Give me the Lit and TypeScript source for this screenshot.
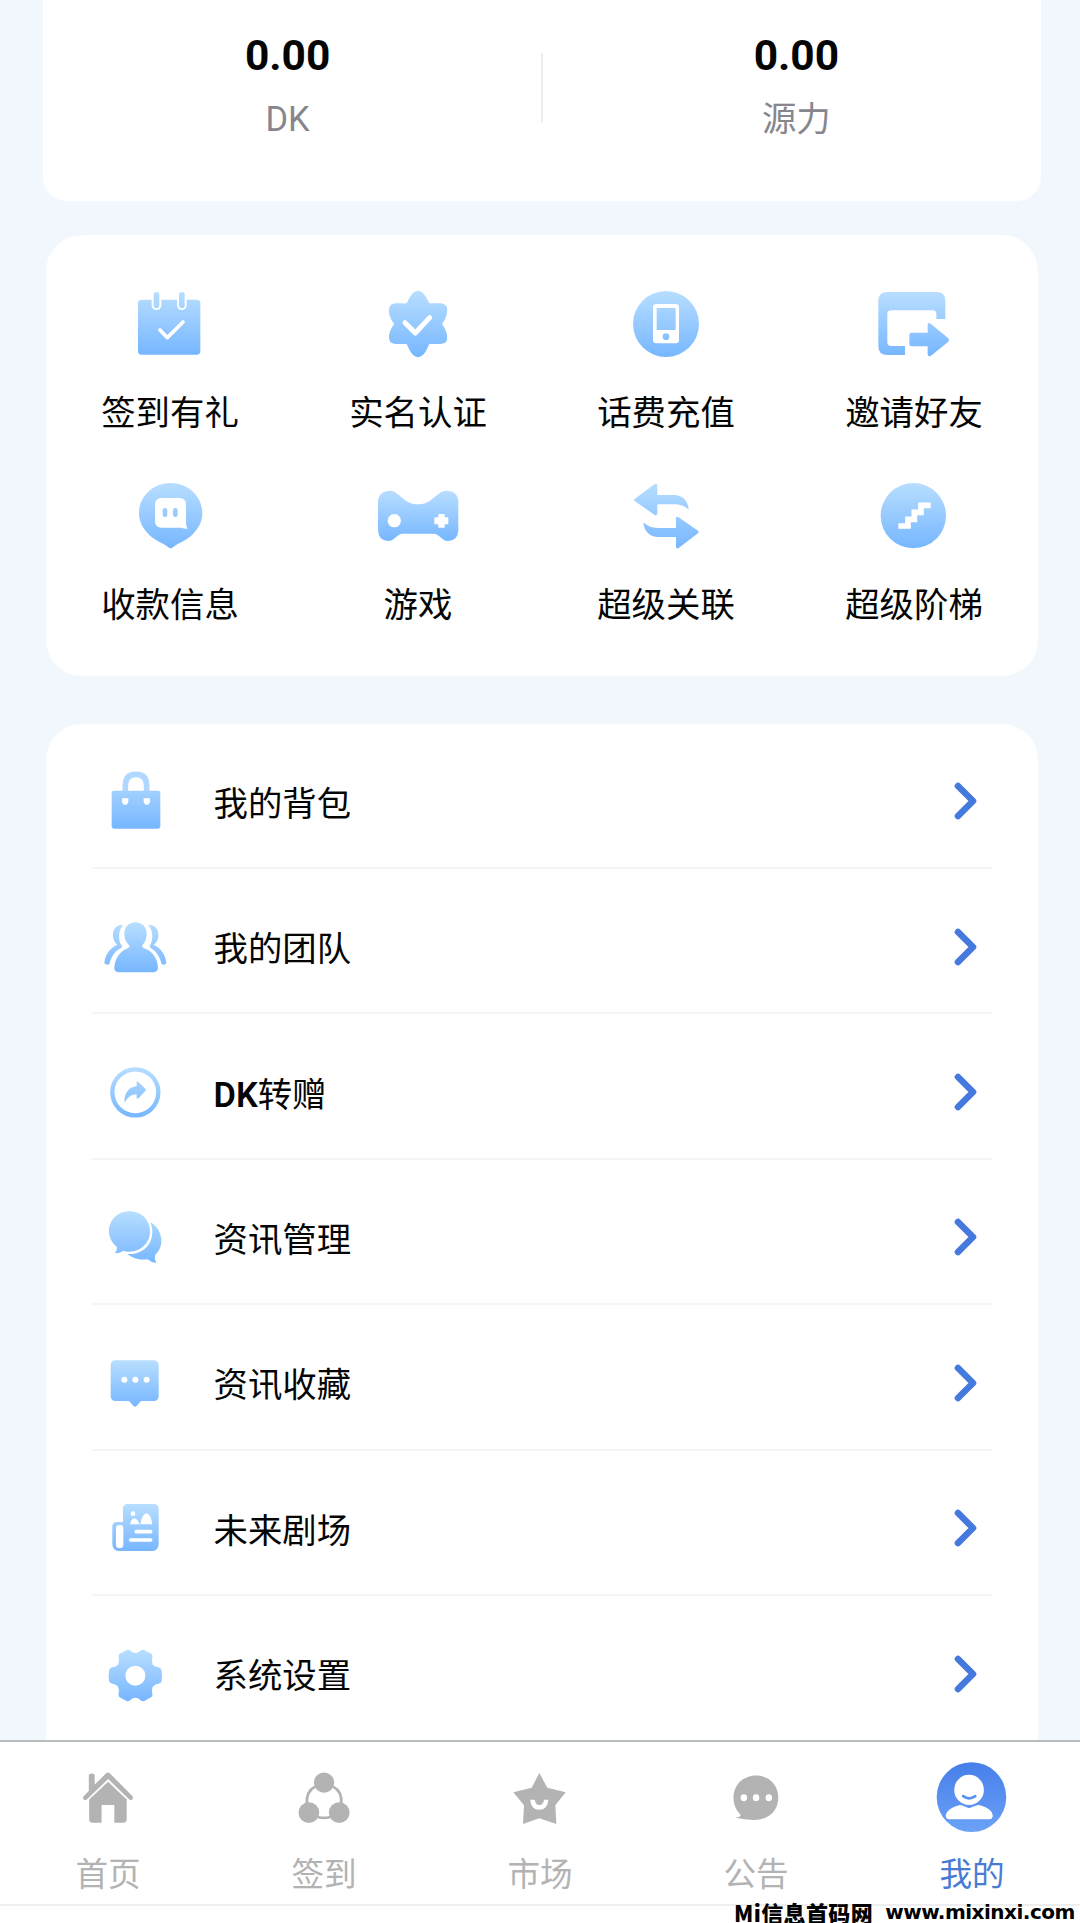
import { LitElement, html, svg, css, type TemplateResult } from "lit";
import { customElement, property } from "lit/decorators.js";

interface IconDef {
  box: string;
  // vertical extent of the gradient, in the icon's own units
  from: number;
  to: number;
  body: TemplateResult;
}

const ICONS: Record<string, IconDef> = {
  calendar: {
    box: "144 36 252 252", from: 64, to: 254,
    body: svg`
      <rect x="174" y="89" width="187" height="165" rx="11"/>
      <rect x="215" y="60" width="29" height="60" rx="14" fill="#fff"/>
      <rect x="291" y="60" width="29" height="60" rx="14" fill="#fff"/>
      <rect x="221" y="66" width="17" height="48" rx="8.5"/>
      <rect x="297" y="66" width="17" height="48" rx="8.5"/>
      <path d="M240 180 L262 203 L309 156" class="line" stroke-width="11"/>`,
  },
  verified: {
    box: "888 36 252 252", from: 62, to: 262,
    body: svg`
      <path d="M1014 62 C1031 63 1040 84 1048 100 C1069 101 1093 96 1100 110 C1105 126 1098 146 1086 162 C1098 178 1105 198 1100 212 C1093 226 1069 221 1048 222 C1040 240 1031 260 1014 262 C997 260 988 240 980 222 C959 221 935 226 929 212 C923 198 930 178 943 162 C930 146 923 126 929 110 C935 96 959 101 980 100 C988 84 997 63 1014 62 Z"/>
      <path d="M975 158 L1006 189 L1049 143" class="line" stroke-width="15"/>`,
  },
  phone: {
    box: "192 36 252 252", from: 62, to: 262,
    body: svg`
      <circle cx="318" cy="162" r="99"/>
      <rect x="279" y="102" width="78" height="118" rx="10" fill="#fff"/>
      <rect x="290" y="114" width="57" height="66"/>
      <circle cx="318" cy="200" r="10"/>`,
  },
  invite: {
    box: "936 36 252 252", from: 66, to: 260,
    body: svg`
      <path fill-rule="evenodd" d="M982 66 H1130 Q1156 66 1156 92 V147 H1129 V132 Q1129 121 1118 121 H993 Q982 121 982 132 V216 Q982 228 994 228 H1035 V255 H982 Q955 255 955 228 V92 Q955 66 982 66 Z"/>
      <path d="M1055 188 H1103 V166 Q1104 155 1113 162 L1164 204 Q1170 210 1164 216 L1113 257 Q1104 263 1103 252 V229 H1055 Q1048 229 1048 222 V195 Q1048 188 1055 188 Z"/>`,
  },
  payee: {
    box: "144 42 252 252", from: 68, to: 266,
    body: svg`
      <path d="M272 69 C325 69 367 109 367 160 C367 187 353 209 336 225 C318 242 295 249 279 262 Q272 268 265 262 C249 249 226 242 208 225 C191 209 177 187 177 160 C177 109 219 69 272 69 Z"/>
      <path fill="#fff" d="M245 114 H298 Q318 114 318 134 V190 Q318 200 323 207 Q312 206 304 203 H245 Q225 203 225 183 V134 Q225 114 245 114 Z"/>
      <rect x="248" y="144" width="14" height="27" rx="7"/>
      <rect x="279" y="144" width="14" height="27" rx="7"/>`,
  },
  game: {
    box: "888 42 252 252", from: 92, to: 244,
    body: svg`
      <path d="M930 92 C958 92 969 133 1014 133 C1059 133 1070 92 1099 92 Q1135 93 1135 128 V210 Q1134 242 1104 243 C1086 243 1078 221 1061 221 H968 C951 221 943 243 925 243 Q895 242 894 210 V128 Q894 93 930 92 Z"/>
      <circle cx="943" cy="182" r="20" fill="#fff"/>
      <path fill="#fff" stroke="#fff" stroke-width="4" stroke-linejoin="round" d="M1077 164 H1092 V174 H1103 V191 H1092 V201 H1077 V191 H1065 V174 H1077 Z"/>`,
  },
  exchange: {
    box: "192 42 252 252", from: 68, to: 268,
    body: svg`
      <path d="M225 116 L283 73 Q292 67 292 78 V105 H340 C368 105 384 121 386 149 C372 137 362 133 340 133 H292 V160 Q291 170 283 164 L225 124 Q220 120 225 116 Z"/>
      <path d="M414 220 L356 264 Q348 269 348 258 V231 H296 C269 231 252 215 250 187 C264 199 273 204 296 204 H348 V176 Q348 167 356 172 L414 212 Q419 216 414 220 Z"/>`,
  },
  stairs: {
    box: "936 42 252 252", from: 68, to: 266,
    body: svg`
      <circle cx="1060" cy="167" r="98"/>
      <path d="M1015 198 H1044 V178 H1063 V157 H1083 V136 H1112" fill="none" stroke="#fff" stroke-width="17"/>`,
  },
  bag: {
    box: "192 177 252 252", from: 215, to: 386,
    body: svg`
      <path d="M286 275 V257 Q286 223 318 223 Q350 223 350 257 V275" fill="none" stroke="#b0d7ff" stroke-width="17"/>
      <rect x="245" y="272" width="146" height="114" rx="7"/>
      <path fill="#fff" d="M276 295 H295 V303 Q295 312 285.500 315 Q276 312 276 303 Z M341 295 H360 V303 Q360 312 350.500 315 Q341 312 341 303 Z"/>`,
  },
  team: {
    box: "192 613 252 252", from: 665, to: 816,
    body: svg`
      <path d="M316 665 C337 665 350 680 350 700 C350 715 343 728 336 735 Q336 741 346 744 C370 753 384 777 384 803 Q383 815 368 815 H268 Q253 815 253 803 C253 777 268 753 290 744 Q299 741 299 735 C290 728 283 715 283 700 C283 680 296 665 316 665 Z"/>
      <path d="M279 673 C257 670 247 689 249 707 C250 720 256 727 262 732 C238 743 225 762 223 788 Q229 795 238 791 C243 769 253 752 274 741 Q279 736 272 731 C265 714 265 689 279 673 Z"/>
      <path d="M355 673 C377 670 387 689 385 707 C384 720 378 727 371 732 C394 743 407 762 409 788 Q405 795 395 791 C390 769 380 752 361 741 Q356 736 362 731 C370 714 369 689 355 673 Z"/>`,
  },
  transfer: {
    box: "42 59 252 252", from: 110, to: 262,
    body: svg`
      <circle cx="166" cy="186" r="69" fill="none" class="ring" stroke-width="13"/>
      <path d="M170 156 Q171 152 175 155 L196 175 Q199 179 196 182 L175 204 Q170 207 170 202 V192 C153 192 143 201 134 217 C131 190 146 170 170 167 Z"/>`,
  },
  chat: {
    box: "42 496 252 252", from: 544, to: 700,
    body: svg`
      <path d="M211 578 C232 590 244 610 244 634 C244 652 236 666 225 676 Q222 687 229 700 Q214 699 203 689 C180 692 157 686 143 673 C185 675 217 648 217 606 Q217 591 211 578 Z"/>
      <path d="M148 545 C183 545 210 570 210 605 C210 640 183 666 148 666 Q137 666 131 663 Q118 671 105 671 Q112 662 111 652 C96 641 87 624 87 605 C87 570 114 545 148 545 Z"/>`,
  },
  message: {
    box: "42 62 252 252", from: 120, to: 260,
    body: svg`
      <path d="M107 120 H221 Q236 120 236 135 V227 Q236 242 221 242 H183 L170 256 Q165 261 160 256 L147 242 H107 Q92 242 92 227 V135 Q92 120 107 120 Z"/>
      <g fill="#fff"><circle cx="133" cy="178" r="9"/><circle cx="166" cy="178" r="9"/><circle cx="200" cy="178" r="9"/></g>`,
  },
  news: {
    box: "42 498 252 252", from: 552, to: 694,
    body: svg`
      <path d="M143 552 H222 Q236 552 236 567 V671 Q236 693 214 693 H119 Q97 693 97 671 V620 Q97 606 112 606 H129 V567 Q129 552 143 552 Z"/>
      <rect x="108" y="615" width="22" height="69" rx="10" fill="#fff"/>
      <circle cx="159" cy="581" r="7" fill="#fff"/>
      <path fill="#fff" d="M151 613 Q151 600 162 595 Q173 595 179 613 Z M181 613 Q186 583 199 580 Q213 583 217 613 Z"/>
      <path d="M169 635 H212 M152 660 H212" class="line" stroke-width="11"/>`,
  },
  settings: {
    box: "42 934 252 252", from: 987, to: 1142,
    body: svg`
      <path fill-rule="evenodd" d="M141 988 Q146 986 151 990 Q158 997 166 997 Q174 997 181 990 Q186 986 192 988 L214 999 Q219 1003 217 1010 Q214 1022 218 1032 Q224 1039 235 1040 Q243 1041 245 1050 Q247 1066 245 1081 Q243 1089 235 1089 Q224 1090 218 1098 Q214 1107 217 1119 Q219 1126 213 1130 L193 1141 Q187 1143 181 1138 Q174 1131 166 1131 Q158 1131 151 1138 Q146 1143 140 1141 L119 1130 Q114 1126 116 1119 Q119 1107 114 1098 Q109 1090 97 1089 Q89 1088 87 1081 Q85 1066 87 1050 Q89 1041 97 1040 Q109 1039 114 1032 Q119 1022 116 1010 Q114 1003 119 999 Z M166 1035 A30 30 0 1 0 166 1095 A30 30 0 1 0 166 1035 Z"/>`,
  },
  home: {
    box: "191.7 112.2 243.9 254.9", from: 0, to: 1,
    body: svg`
      <path d="M258 168 Q258 162 266 162 Q275 162 275 168 V196 L309 161 Q314 157 318 161 L385 231 Q388 236 384 241 Q379 245 374 240 L314 179 L254 240 Q248 245 243 241 Q239 236 243 231 L258 215 Z"/>
      <path d="M314 187 L368 241 V302 Q368 312 357 312 H332 V258 H295 V312 H270 Q259 312 259 302 V241 Z"/>`,
  },
  share: {
    box: "818.9 112.2 243.9 254.9", from: 0, to: 1,
    body: svg`
      <ellipse cx="941" cy="190" rx="29.500" ry="31"/>
      <ellipse cx="897" cy="281" rx="30" ry="31.500"/><ellipse cx="985" cy="281" rx="30" ry="31.500"/>
      <path d="M915 202 Q889 216 891 254 M967 202 Q994 216 991 254 M923 294 Q941 300 959 294" fill="none" class="ring" stroke-width="8"/>`,
  },
  star: {
    box: "0 0 252 252", from: 0, to: 1,
    body: svg`
      <path d="M124 48 L148 92 L203 106 L172 145 L175 201 L124 184 L75 201 L78 145 L46 106 L101 92 Z"/>
      <path fill="#fff" d="M97 128 H110 Q113 144 124 144 Q136 144 138 128 H151 Q149 158 124 158 Q98 158 97 128 Z"/>`,
  },
  notice: {
    box: "505.3 112.2 243.9 254.9", from: 0, to: 1,
    body: svg`
      <path d="M627 168 C663 168 692 196 692 235 C692 278 662 303 622 303 C604 303 584 301 568 296 Q585 294 582 287 C568 271 562 255 562 235 C562 196 591 168 627 168 Z"/>
      <g fill="#fff"><ellipse cx="592" cy="236" rx="9.500" ry="10.500"/><ellipse cx="627.500" cy="236" rx="9.500" ry="10.500"/><ellipse cx="664.500" cy="236" rx="9.500" ry="10.500"/></g>`,
  },
  profile: {
    box: "1132.6 112.2 243.9 254.9", from: 128, to: 340,
    body: svg`
      <ellipse cx="1253" cy="234" rx="101" ry="106"/>
      <path fill="#fff" d="M1219 258 Q1227 259 1246 268 Q1266 259 1275 258 Q1315 269 1315 290 Q1314 301 1306 301 H1188 Q1179 301 1178 290 Q1181 268 1219 258 Z"/>
      <ellipse cx="1246" cy="212" rx="43" ry="46" fill="#fff"/>
      <path d="M1229 231 Q1246 244 1264 231" fill="none" class="ring" stroke-width="8" stroke-linecap="round"/>`,
  },
};

const TONES: Record<string, [string, string]> = {
  sky: ["#b8deff", "#76b6ff"],
  gray: ["#b3b3b3", "#b3b3b3"],
  royal: ["#467eea", "#6ba2f7"],
};

@customElement("app-icon")
class AppIcon extends LitElement {
  static styles = css`
    :host { display: block; width: 84px; height: 84px; flex: none; }
    .glyph { display: block; width: 100%; height: 100%; }
    .line { fill: none; stroke: #fff; stroke-linecap: round; stroke-linejoin: round; }
    .ring { stroke: url(#tone); }
  `;
  @property() name = "";
  @property() tone = "sky";

  render() {
    const icon = ICONS[this.name];
    const [top, bottom] = TONES[this.tone];
    return html`<svg class="glyph" viewBox=${icon.box} preserveAspectRatio="none" fill="url(#tone)">
      <defs>
        <linearGradient id="tone" gradientUnits="userSpaceOnUse" x1="0" x2="0" y1=${icon.from} y2=${icon.to}>
          <stop offset="0" stop-color=${top} /><stop offset="1" stop-color=${bottom} />
        </linearGradient>
      </defs>
      ${icon.body}
    </svg>`;
  }
}

const BALANCES = [["0.00", "DK"], ["0.00", "源力"]];
const SHORTCUTS = [
  ["calendar", "签到有礼"], ["verified", "实名认证"], ["phone", "话费充值"], ["invite", "邀请好友"],
  ["payee", "收款信息"], ["game", "游戏"], ["exchange", "超级关联"], ["stairs", "超级阶梯"],
];
// icon, Latin prefix, title
const MENU = [
  ["bag", "", "我的背包"], ["team", "", "我的团队"], ["transfer", "DK", "转赠"], ["chat", "", "资讯管理"],
  ["message", "", "资讯收藏"], ["news", "", "未来剧场"], ["settings", "", "系统设置"],
];
const TABS = [["home", "首页"], ["share", "签到"], ["star", "市场"], ["notice", "公告"], ["profile", "我的"]];

@customElement("app-root")
class AppRoot extends LitElement {
  static styles = css`
    :host {
      display: flex; flex-direction: column; position: relative; overflow: hidden;
      width: 1080px; height: 1923px; background: #f2f7fe; color: #050505;
      font-family: Roboto, "Noto Sans CJK SC", sans-serif;
    }
    * { box-sizing: border-box; }
    .content { flex: 1; min-height: 0; overflow: hidden; }
    .balances {
      display: flex; align-items: flex-start; height: 200.5px; margin: 0 39px 0 43px;
      border-radius: 0 0 24px 24px; background: #fff;
    }
    .balance { flex: 1; display: flex; flex-direction: column; align-items: center; padding-top: 31px; }
    .balance:first-child { padding-right: 9px; }
    .balance:last-child { padding-left: 9px; }
    .amount { font-size: 42.5px; line-height: 50px; font-weight: 700; }
    .unit { font-size: 34.4px; line-height: 40px; margin-top: 18px; color: #86868c; }
    .divider { width: 1.5px; height: 69px; margin-top: 53px; background: #ececef; }
    .shortcuts {
      display: grid; grid-template-columns: repeat(4, 1fr); grid-auto-rows: 192px;
      height: 441px; margin: 34.5px 42px 0 46px; padding-top: 47px;
      border-radius: 36px; background: #fff;
    }
    .shortcut { display: flex; flex-direction: column; align-items: center; }
    .label { font-size: 34.4px; line-height: 40px; white-space: nowrap; }
    .shortcut .label { margin-top: 27px; }
    .menu { margin: 47.6px 42px 0 46px; padding: 0 46px; border-radius: 36px 36px 0 0; background: #fff; }
    .row {
      display: flex; align-items: center; height: 145.4px; padding: 12px 12px 0 2px;
      border-bottom: 2px solid #f5f5f5;
    }
    .row:last-child { border-bottom-color: transparent; }
    .row .label { flex: 1; margin-left: 35.5px; padding-top: 5px; }
    .latin { font-weight: 600; }
    .chevron { width: 28px; height: 44px; fill: none; stroke: #4679de; stroke-width: 6.6; stroke-linecap: round; stroke-linejoin: round; }
    .dock { height: 183px; background: #fff; }
    .tabs {
      display: grid; grid-template-columns: repeat(5, 1fr); height: 166px;
      border-top: 2px solid #b9bfbe; border-bottom: 2px solid #eee;
    }
    .tab { display: flex; flex-direction: column; align-items: center; padding-top: 15px; color: #b3b3b3; }
    .tab.active { color: #4a7bd4; }
    .caption { font-size: 32.6px; line-height: 40px; margin-top: 13.5px; }
    .watermark {
      position: absolute; left: 734px; top: 1901px; display: flex; gap: 12px;
      font: 900 22px/22px "Noto Sans CJK SC", sans-serif; color: #000; white-space: nowrap;
    }
    .brand { letter-spacing: 0.4px; }
    .site { font-family: "DejaVu Sans", sans-serif; font-size: 20px; font-weight: 700; letter-spacing: -0.5px; }
  `;

  render() {
    const [dk, power] = BALANCES.map(([amount, unit]) => html`
      <div class="balance"><div class="amount">${amount}</div><div class="unit">${unit}</div></div>`);
    return html`
      <main class="content">
        <section class="balances">${dk}<div class="divider"></div>${power}</section>
        <section class="shortcuts">
          ${SHORTCUTS.map(([icon, text]) => html`
            <div class="shortcut"><app-icon name=${icon}></app-icon><div class="label">${text}</div></div>`)}
        </section>
        <section class="menu">
          ${MENU.map(([icon, latin, text]) => html`
            <div class="row">
              <app-icon name=${icon}></app-icon>
              <div class="label"><span class="latin">${latin}</span>${text}</div>
              <svg class="chevron" viewBox="0 0 28 44"><path d="M6 7 L21 22 L6 37" /></svg>
            </div>`)}
        </section>
      </main>
      <nav class="dock">
        <div class="tabs">
          ${TABS.map(([icon, text]) => {
            const active = icon === "profile";
            return html`<div class="tab ${active ? "active" : ""}">
              <app-icon name=${icon} tone=${active ? "royal" : "gray"}></app-icon>
              <div class="caption">${text}</div>
            </div>`;
          })}
        </div>
      </nav>
      <div class="watermark"><span class="brand">Mi信息首码网</span><span class="site">www.mixinxi.com</span></div>
    `;
  }
}
